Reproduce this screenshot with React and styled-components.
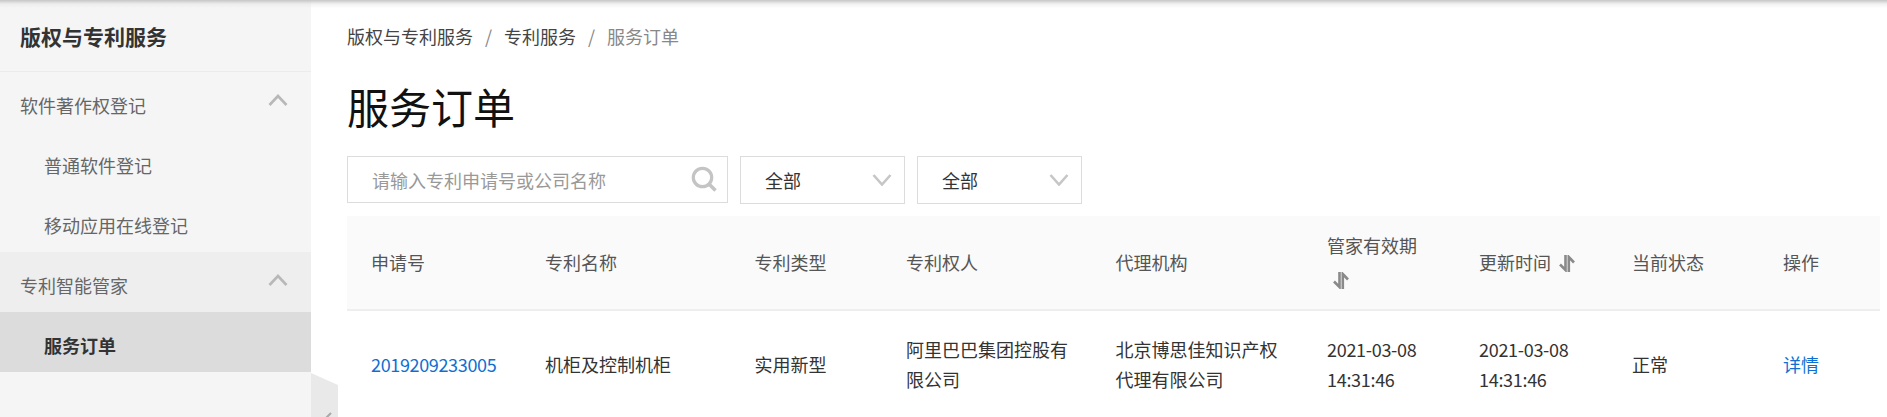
import React from 'react';
import styled, { createGlobalStyle } from 'styled-components';

const GlobalStyle = createGlobalStyle`
  html, body {
    margin: 0;
    padding: 0;
    height: 100%;
    overflow: hidden;
    background: #fff;
    font-family: "Noto Sans CJK SC", "Liberation Sans", sans-serif;
  }
  #root { height: 100%; }
  * { box-sizing: border-box; }
`;

const COLUMNS = [174, 209.5, 151.5, 209.5, 211.5, 152, 153, 151, 121];

const ChevronUp = () => (
  <svg width="20" height="12" viewBox="0 0 20 12" fill="none" stroke="#b8b8b8" strokeWidth="2.6">
    <path d="M1.5 11 L10 2 L18.5 11" />
  </svg>
);

const ChevronDown = () => (
  <svg width="20" height="12" viewBox="0 0 20 12" fill="none" stroke="#c6c6c6" strokeWidth="2.6">
    <path d="M1.5 1 L10 10.5 L18.5 1" />
  </svg>
);

const SearchGlyph = () => (
  <SearchIcon width="26" height="26" viewBox="0 0 26 26" fill="none" stroke="#c4c4c4" strokeWidth="3.2">
    <circle cx="11.5" cy="11.5" r="9.2" />
    <path d="M18 18 L24.5 24.5" strokeWidth="3.6" />
  </SearchIcon>
);

const SortGlyph = () => (
  <SortIcon width="16" height="17" viewBox="0 0 16 17" fill="none" stroke="#8a8a8a" strokeWidth="2.6">
    <path d="M6.5 0 V15 L1 9.5" />
    <path d="M9.8 17 V2 L15 7.5" />
  </SortIcon>
);

const App = () => (
  <Page>
    <GlobalStyle />
    <TopShadow />
    <Sidebar>
      <SidebarTitle>版权与专利服务</SidebarTitle>
      <NavGroup>
        <span>软件著作权登记</span>
        <ChevronUp />
      </NavGroup>
      <NavItem>普通软件登记</NavItem>
      <NavItem>移动应用在线登记</NavItem>
      <NavGroup $open>
        <span>专利智能管家</span>
        <ChevronUp />
      </NavGroup>
      <NavItem $active>服务订单</NavItem>
    </Sidebar>
    <CollapseHandle>
      <svg width="12" height="12" viewBox="0 0 12 12" fill="none" stroke="#a8a8a8" strokeWidth="2">
        <path d="M9 1 L2 8 L9 15" />
      </svg>
    </CollapseHandle>
    <Main>
      <Breadcrumb>
        <span>版权与专利服务</span>
        <Separator>/</Separator>
        <span>专利服务</span>
        <Separator>/</Separator>
        <Current>服务订单</Current>
      </Breadcrumb>
      <Heading>服务订单</Heading>
      <Toolbar>
        <SearchBox>
          <SearchInput placeholder="请输入专利申请号或公司名称" />
          <SearchGlyph />
        </SearchBox>
        <SelectBox>
          <span>全部</span>
          <ChevronDown />
        </SelectBox>
        <SelectBox>
          <span>全部</span>
          <ChevronDown />
        </SelectBox>
      </Toolbar>
      <Table>
        <colgroup>
          {COLUMNS.map((width, i) => (
            <col key={i} style={{ width }} />
          ))}
        </colgroup>
        <thead>
          <tr>
            <Th>申请号</Th>
            <Th>专利名称</Th>
            <Th>专利类型</Th>
            <Th>专利权人</Th>
            <Th>代理机构</Th>
            <Th>管家有效期 <SortGlyph /></Th>
            <Th>更新时间 <SortGlyph /></Th>
            <Th>当前状态</Th>
            <Th>操作</Th>
          </tr>
        </thead>
        <tbody>
          <tr>
            <Td><LinkText $digits>2019209233005</LinkText></Td>
            <Td>机柜及控制机柜</Td>
            <Td>实用新型</Td>
            <Td>阿里巴巴集团控股有限公司</Td>
            <Td>北京博思佳知识产权代理有限公司</Td>
            <Td><Digits>2021-03-08 14:31:46</Digits></Td>
            <Td><Digits>2021-03-08 14:31:46</Digits></Td>
            <Td>正常</Td>
            <Td><LinkText>详情</LinkText></Td>
          </tr>
        </tbody>
      </Table>
    </Main>
  </Page>
);

const Page = styled.div`
  position: relative;
  display: flex;
  height: 100%;
  overflow: hidden;
`;

const TopShadow = styled.div`
  position: absolute;
  top: 0;
  left: 0;
  right: 0;
  height: 8px;
  z-index: 2;
  background: linear-gradient(to bottom, #c6c6c6, rgba(230, 230, 230, 0.55) 50%, rgba(255, 255, 255, 0));
`;

const Sidebar = styled.aside`
  flex: 0 0 311px;
  background: #f5f5f5;
`;

const SidebarTitle = styled.div`
  height: 72px;
  padding-left: 20px;
  display: flex;
  align-items: center;
  font-size: 21px;
  font-weight: 700;
  color: #333;
  border-bottom: 1px solid #ebebeb;
`;

const NavGroup = styled.div`
  height: 60px;
  padding: 5px 23px 0 20px;
  display: flex;
  align-items: center;
  justify-content: space-between;
  font-size: 18px;
  color: #666;
  background: ${props => (props.$open ? '#eeeeee' : 'transparent')};

  svg {
    margin-top: -9px;
  }
`;

const NavItem = styled.div`
  height: 60px;
  padding: 5px 0 0 44px;
  display: flex;
  align-items: center;
  font-size: 18px;
  color: ${props => (props.$active ? '#333' : '#666')};
  font-weight: ${props => (props.$active ? 700 : 400)};
  background: ${props => (props.$active ? '#dcdcdc' : 'transparent')};
`;

const CollapseHandle = styled.div`
  position: absolute;
  left: 311px;
  top: 373px;
  width: 27px;
  height: 44px;
  background: #e9e9e9;
  clip-path: polygon(0 0, 100% 12px, 100% 100%, 0 100%);

  svg {
    position: absolute;
    left: 11px;
    top: 39px;
    overflow: visible;
  }
`;

const Main = styled.main`
  flex: 1;
  min-width: 0;
  padding: 21px 7px 0 36px;
`;

const Breadcrumb = styled.div`
  display: flex;
  align-items: center;
  height: 30px;
  font-size: 18px;
  color: #444;
`;

const Separator = styled.span`
  width: 31px;
  text-align: center;
  color: #888;
`;

const Current = styled.span`
  color: #888;
`;

const Heading = styled.h1`
  margin: 25px 0 0;
  height: 60px;
  line-height: 60px;
  font-size: 42px;
  font-weight: 400;
  color: #111;
`;

const Toolbar = styled.div`
  display: flex;
  align-items: flex-start;
  gap: 12px;
  margin-top: 20px;
`;

const SearchBox = styled.div`
  width: 381px;
  height: 47px;
  padding: 0 10px 0 24px;
  display: flex;
  align-items: center;
  border: 1px solid #dcdcdc;
`;

const SearchIcon = styled.svg`
  margin-top: -1px;
`;

const SearchInput = styled.input`
  flex: 1;
  min-width: 0;
  border: 0;
  outline: 0;
  padding: 0;
  background: transparent;
  font: inherit;
  font-size: 18px;
  color: #333;

  &::placeholder {
    color: #999;
  }
`;

const SelectBox = styled.div`
  width: 165px;
  height: 48px;
  padding: 0 12px 0 24px;
  display: flex;
  align-items: center;
  justify-content: space-between;
  border: 1px solid #dcdcdc;
  font-size: 18px;
  color: #333;
`;

const Table = styled.table`
  width: 100%;
  margin-top: 12px;
  table-layout: fixed;
  border-collapse: collapse;
  font-size: 18px;
`;

const Th = styled.th`
  height: 94px;
  padding: 0 20px 2px 24px;
  text-align: left;
  font-weight: 400;
  line-height: 34px;
  word-spacing: -2px;
  color: #555;
  background: #fafafa;
  border-bottom: 2px solid #eee;
`;

const Td = styled.td`
  padding: 23px 20px 27px 24px;
  line-height: 30px;
  color: #333;
`;

const Digits = styled.span`
  letter-spacing: -0.3px;
`;

const LinkText = styled.span`
  color: #0f6fd1;
  letter-spacing: ${props => (props.$digits ? '-0.35px' : '0')};
`;

const SortIcon = styled.svg`
  vertical-align: -2px;
  margin-left: 6px;
`;

export default App;
